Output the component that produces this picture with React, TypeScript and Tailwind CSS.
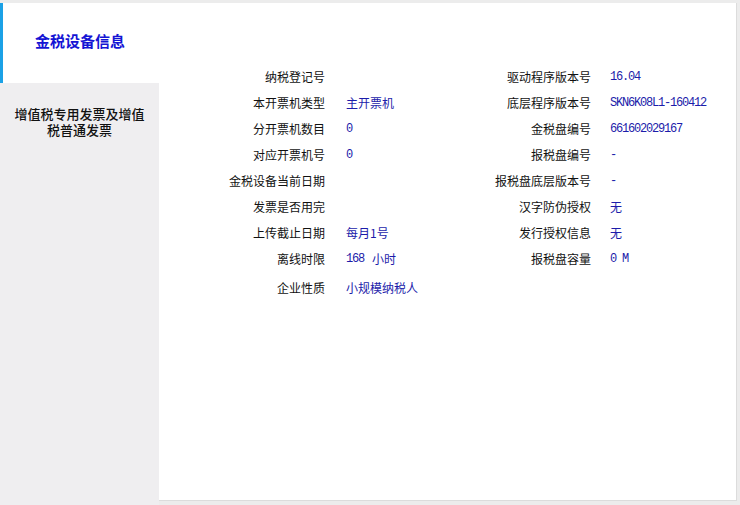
import React from "react";

const left: [string, string][] = [
  ["纳税登记号", ""],
  ["本开票机类型", "主开票机"],
  ["分开票机数目", "0"],
  ["对应开票机号", "0"],
  ["金税设备当前日期", ""],
  ["发票是否用完", ""],
  ["上传截止日期", "每月1号"],
  ["离线时限", "168 小时"],
];
const right: [string, string][] = [
  ["驱动程序版本号", "16.04"],
  ["底层程序版本号", "SKN6K08L1-160412"],
  ["金税盘编号", "661602029167"],
  ["报税盘编号", "-"],
  ["报税盘底层版本号", "-"],
  ["汉字防伪授权", "无"],
  ["发行授权信息", "无"],
  ["报税盘容量", "0 M"],
];

const cjk = { fontFamily: '"Noto Sans CJK SC", "Noto Sans", sans-serif' };
const val = { fontFamily: '"Liberation Mono", "Noto Sans CJK SC", monospace' };

function Mono({ t }: { t: string }) {
  return (
    <span className="text-[12px] tracking-[-1.2px] leading-none whitespace-pre" style={val}>
      {t}
    </span>
  );
}

function Val({ v, pl }: { v: string; pl: string }) {
  let content: React.ReactNode = <span className="leading-none">{v}</span>;
  if (/^[A-Z0-9.\- ]+$/.test(v) && v !== "") content = <Mono t={v} />;
  else if (v === "168 小时")
    content = (
      <>
        <Mono t="168" />
        <span className="leading-none ml-[8px]">小时</span>
      </>
    );
  return <div className={`h-[26px] flex items-center text-[#1c1caa] ${pl}`}>{content}</div>;
}

export default function App() {
  return (
    <div className="w-[740px] h-[505px] bg-[#ececec] pt-[3px] flex overflow-hidden" style={cjk}>
      <div className="w-[159px] flex flex-col">
        <div className="h-[80px] bg-white border-l-[3px] border-[#1ba1e6] flex items-center pl-[32px] pb-[4px]">
          <span className="text-[15px] font-bold text-[#1414d4]">金税设备信息</span>
        </div>
        <div className="flex-1 bg-[#efeef0] px-[13px] pt-[23px] text-center text-[13px] leading-[16px] font-medium text-[#111]">
          增值税专用发票及增值税普通发票
        </div>
      </div>
      <div className="flex-1 bg-white mb-[4px] mr-[3px] border-r border-b border-[#dcdcdc] pt-[61px]">
        <div className="grid grid-cols-[166px_140px_126px_1fr] text-[12px] leading-[26px]">
          {left.map(([l, v], i) => (
            <React.Fragment key={i}>
              <div className="h-[26px] text-right text-[#111]">{l}</div>
              <Val v={v} pl="pl-[21px]" />
              <div className="h-[26px] text-right text-[#111]">{right[i][0]}</div>
              <Val v={right[i][1]} pl="pl-[19px]" />
            </React.Fragment>
          ))}
          <div className="h-[26px] text-right text-[#111] mt-[3px]">企业性质</div>
          <div className="h-[26px] pl-[21px] text-[#1c1caa] mt-[3px]">小规模纳税人</div>
        </div>
      </div>
    </div>
  );
}
